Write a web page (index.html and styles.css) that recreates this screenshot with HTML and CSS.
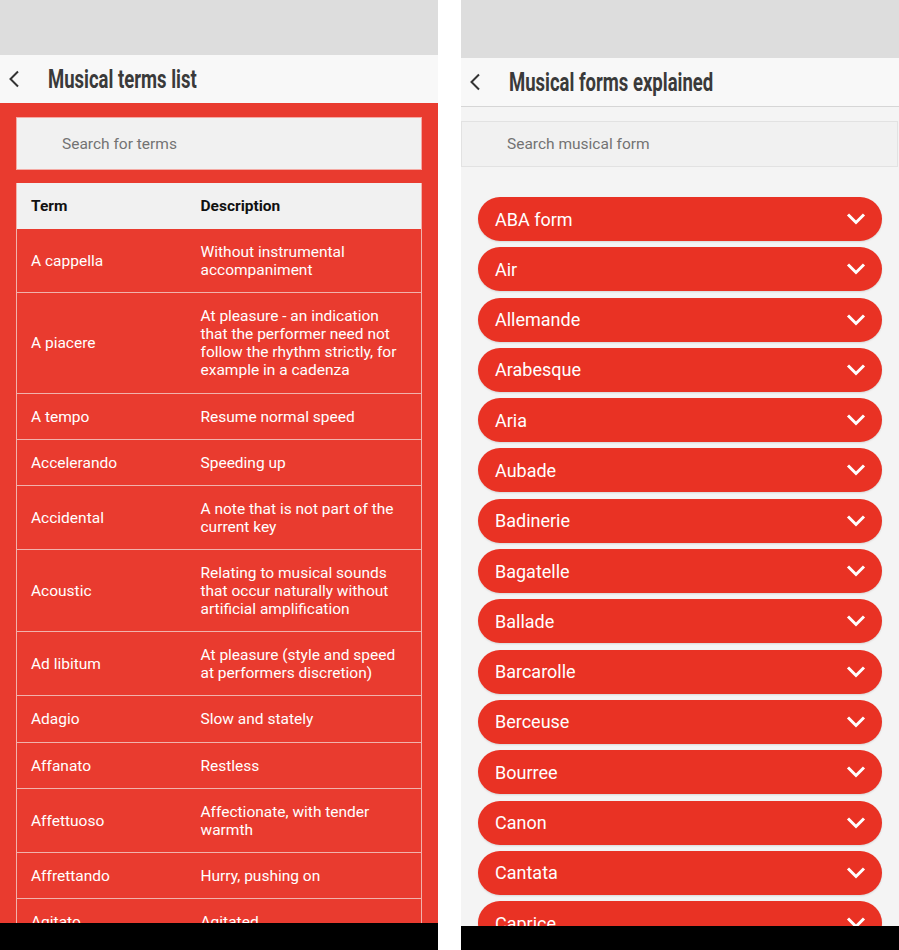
FILE: index.html
```html
<!DOCTYPE html>
<html lang="en">
<head>
  <meta charset="UTF-8"/>
  <meta name="viewport" content="width=device-width,initial-scale=1.0"/>
  <title>Musical terms</title>
  <link rel="stylesheet" href="styles.css">
</head>
<body>

  <!-- Screen 1: terms table -->
  <section class="phone phone-terms">
    <div class="status"></div>
    <header class="appbar">
      <span class="back">
        <svg width="12" height="18" viewBox="0 0 12 18"><polyline points="10,1.5 2.5,9 10,16.5" fill="none" stroke="#333" stroke-width="2"/></svg>
      </span>
      <h1>Musical terms list</h1>
    </header>

    <main class="terms">
      <input class="search search-terms" type="text" placeholder="Search for terms">

      <table class="term-table">
        <thead>
          <tr><th class="col-term">Term</th><th>Description</th></tr>
        </thead>
        <tbody>
          <tr><td>A cappella</td><td>Without instrumental accompaniment</td></tr>
          <tr><td>A piacere</td><td>At pleasure - an indication that the performer need not follow the rhythm strictly, for example in a cadenza</td></tr>
          <tr><td>A tempo</td><td>Resume normal speed</td></tr>
          <tr><td>Accelerando</td><td>Speeding up</td></tr>
          <tr><td>Accidental</td><td>A note that is not part of the current key</td></tr>
          <tr><td>Acoustic</td><td>Relating to musical sounds that occur naturally without artificial amplification</td></tr>
          <tr><td>Ad libitum</td><td>At pleasure (style and speed at performers discretion)</td></tr>
          <tr><td>Adagio</td><td>Slow and stately</td></tr>
          <tr><td>Affanato</td><td>Restless</td></tr>
          <tr><td>Affettuoso</td><td>Affectionate, with tender warmth</td></tr>
          <tr><td>Affrettando</td><td>Hurry, pushing on</td></tr>
          <tr><td>Agitato</td><td>Agitated</td></tr>
          <tr><td>Al fine</td><td>To the end</td></tr>
        </tbody>
      </table>
    </main>
    <div class="navbar"></div>
  </section>

  <!-- Screen 2: forms accordion -->
  <section class="phone phone-forms">
    <div class="status"></div>
    <header class="appbar appbar-forms">
      <span class="back">
        <svg width="12" height="18" viewBox="0 0 12 18"><polyline points="10,1.5 2.5,9 10,16.5" fill="none" stroke="#333" stroke-width="2"/></svg>
      </span>
      <h1>Musical forms explained</h1>
    </header>

    <main class="forms">
      <input class="search search-forms" type="text" placeholder="Search musical form">

      <ul class="form-list">
        <li class="pill"><span>ABA form</span><svg class="chev" width="20" height="14" viewBox="0 0 20 14"><polyline points="2,2.5 10,10.5 18,2.5" fill="none" stroke="#fff" stroke-width="3"/></svg></li>
        <li class="pill"><span>Air</span><svg class="chev" width="20" height="14" viewBox="0 0 20 14"><polyline points="2,2.5 10,10.5 18,2.5" fill="none" stroke="#fff" stroke-width="3"/></svg></li>
        <li class="pill"><span>Allemande</span><svg class="chev" width="20" height="14" viewBox="0 0 20 14"><polyline points="2,2.5 10,10.5 18,2.5" fill="none" stroke="#fff" stroke-width="3"/></svg></li>
        <li class="pill"><span>Arabesque</span><svg class="chev" width="20" height="14" viewBox="0 0 20 14"><polyline points="2,2.5 10,10.5 18,2.5" fill="none" stroke="#fff" stroke-width="3"/></svg></li>
        <li class="pill"><span>Aria</span><svg class="chev" width="20" height="14" viewBox="0 0 20 14"><polyline points="2,2.5 10,10.5 18,2.5" fill="none" stroke="#fff" stroke-width="3"/></svg></li>
        <li class="pill"><span>Aubade</span><svg class="chev" width="20" height="14" viewBox="0 0 20 14"><polyline points="2,2.5 10,10.5 18,2.5" fill="none" stroke="#fff" stroke-width="3"/></svg></li>
        <li class="pill"><span>Badinerie</span><svg class="chev" width="20" height="14" viewBox="0 0 20 14"><polyline points="2,2.5 10,10.5 18,2.5" fill="none" stroke="#fff" stroke-width="3"/></svg></li>
        <li class="pill"><span>Bagatelle</span><svg class="chev" width="20" height="14" viewBox="0 0 20 14"><polyline points="2,2.5 10,10.5 18,2.5" fill="none" stroke="#fff" stroke-width="3"/></svg></li>
        <li class="pill"><span>Ballade</span><svg class="chev" width="20" height="14" viewBox="0 0 20 14"><polyline points="2,2.5 10,10.5 18,2.5" fill="none" stroke="#fff" stroke-width="3"/></svg></li>
        <li class="pill"><span>Barcarolle</span><svg class="chev" width="20" height="14" viewBox="0 0 20 14"><polyline points="2,2.5 10,10.5 18,2.5" fill="none" stroke="#fff" stroke-width="3"/></svg></li>
        <li class="pill"><span>Berceuse</span><svg class="chev" width="20" height="14" viewBox="0 0 20 14"><polyline points="2,2.5 10,10.5 18,2.5" fill="none" stroke="#fff" stroke-width="3"/></svg></li>
        <li class="pill"><span>Bourree</span><svg class="chev" width="20" height="14" viewBox="0 0 20 14"><polyline points="2,2.5 10,10.5 18,2.5" fill="none" stroke="#fff" stroke-width="3"/></svg></li>
        <li class="pill"><span>Canon</span><svg class="chev" width="20" height="14" viewBox="0 0 20 14"><polyline points="2,2.5 10,10.5 18,2.5" fill="none" stroke="#fff" stroke-width="3"/></svg></li>
        <li class="pill"><span>Cantata</span><svg class="chev" width="20" height="14" viewBox="0 0 20 14"><polyline points="2,2.5 10,10.5 18,2.5" fill="none" stroke="#fff" stroke-width="3"/></svg></li>
        <li class="pill"><span>Caprice</span><svg class="chev" width="20" height="14" viewBox="0 0 20 14"><polyline points="2,2.5 10,10.5 18,2.5" fill="none" stroke="#fff" stroke-width="3"/></svg></li>
      </ul>
    </main>
    <div class="navbar"></div>
  </section>

</body>
</html>
```

FILE: styles.css
```css
:root {
  --red:      #e93b2f;
  --pill:     #e93224;
  --line:     #f1b2ac;
  --field:    #f1f1f1;
  --bar:      #f8f8f8;
  --status:   #dddddd;
  --ink:      #3a3a3a;
}
* {
  box-sizing: border-box;
}
body {
  margin: 0;
  height: 950px;
  overflow: hidden;
  display: flex;
  gap: 23px;
  background: #ffffff;
  font-family: Roboto, "Noto Sans", sans-serif;
}
.phone {
  width: 438px;
  height: 950px;
  display: flex;
  flex-direction: column;
  overflow: hidden;
}
.status {
  height: 55px;
  flex-shrink: 0;
  background: var(--status);
}
.phone-forms .status {
  height: 58px;
}
.appbar {
  height: 48px;
  flex-shrink: 0;
  background: var(--bar);
  display: flex;
  align-items: center;
}
.appbar-forms {
  height: 49px;
  border-bottom: 1px solid #d6d6d6;
}
.back {
  width: 48px;
  padding-left: 8px;
  display: flex;
  align-items: center;
}
/* no condensed display face installed: squeeze Roboto to its width */
.appbar h1 {
  margin: 0;
  display: inline-block;
  font-family: Roboto, sans-serif;
  font-weight: bold;
  font-size: 25px;
  color: var(--ink);
  white-space: nowrap;
  transform: scaleX(0.74);
  transform-origin: left center;
}
.navbar {
  height: 27px;
  flex-shrink: 0;
  background: #000000;
}
.phone-forms .navbar {
  height: 24px;
}

/* search fields */
.search {
  display: block;
  width: 100%;
  background: var(--field);
  padding: 0 0 0 45px;
  font-family: Roboto, "Noto Sans", sans-serif;
  font-size: 15.5px;
  color: #333;
  outline: none;
}
.search::placeholder {
  color: #737373;
}
.search-terms {
  height: 53px;
  border: 1px solid #f4aaa4;
}
.search-forms {
  height: 46px;
  width: 437px;
  border: 1px solid #e2e2e2;
}

/* terms table */
.terms {
  flex: 1;
  overflow: hidden;
  background: var(--red);
  padding: 14px 16px 0;
}
.term-table {
  width: 406px;
  margin-top: 13px;
  border-collapse: collapse;
  table-layout: fixed;
  border-left: 1px solid var(--line);
  border-right: 1px solid var(--line);
  font-size: 15.5px;
  line-height: 18.1px;
}
.term-table th {
  height: 46px;
  padding: 0 14px;
  text-align: left;
  background: var(--field);
  color: #111;
  font-weight: bold;
}
.term-table .col-term {
  width: 170px;
}
.term-table td {
  padding: 14px 14px 13px;
  color: #ffffff;
  vertical-align: middle;
  border-bottom: 1px solid var(--line);
}

/* forms accordion */
.forms {
  flex: 1;
  overflow: hidden;
  background: #f4f4f4;
  padding-top: 14px;
}
.form-list {
  list-style: none;
  margin: 0;
  padding: 30px 17px 0;
}
.pill {
  height: 44px;
  margin-bottom: 6.3px;
  padding: 0 17px;
  border-radius: 22px;
  background: var(--pill);
  color: #ffffff;
  font-size: 18px;
  display: flex;
  align-items: center;
  justify-content: space-between;
  box-shadow: 0 1px 2px rgba(0,0,0,0.12);
}
.chev {
  margin-right: -1px;
}
```
